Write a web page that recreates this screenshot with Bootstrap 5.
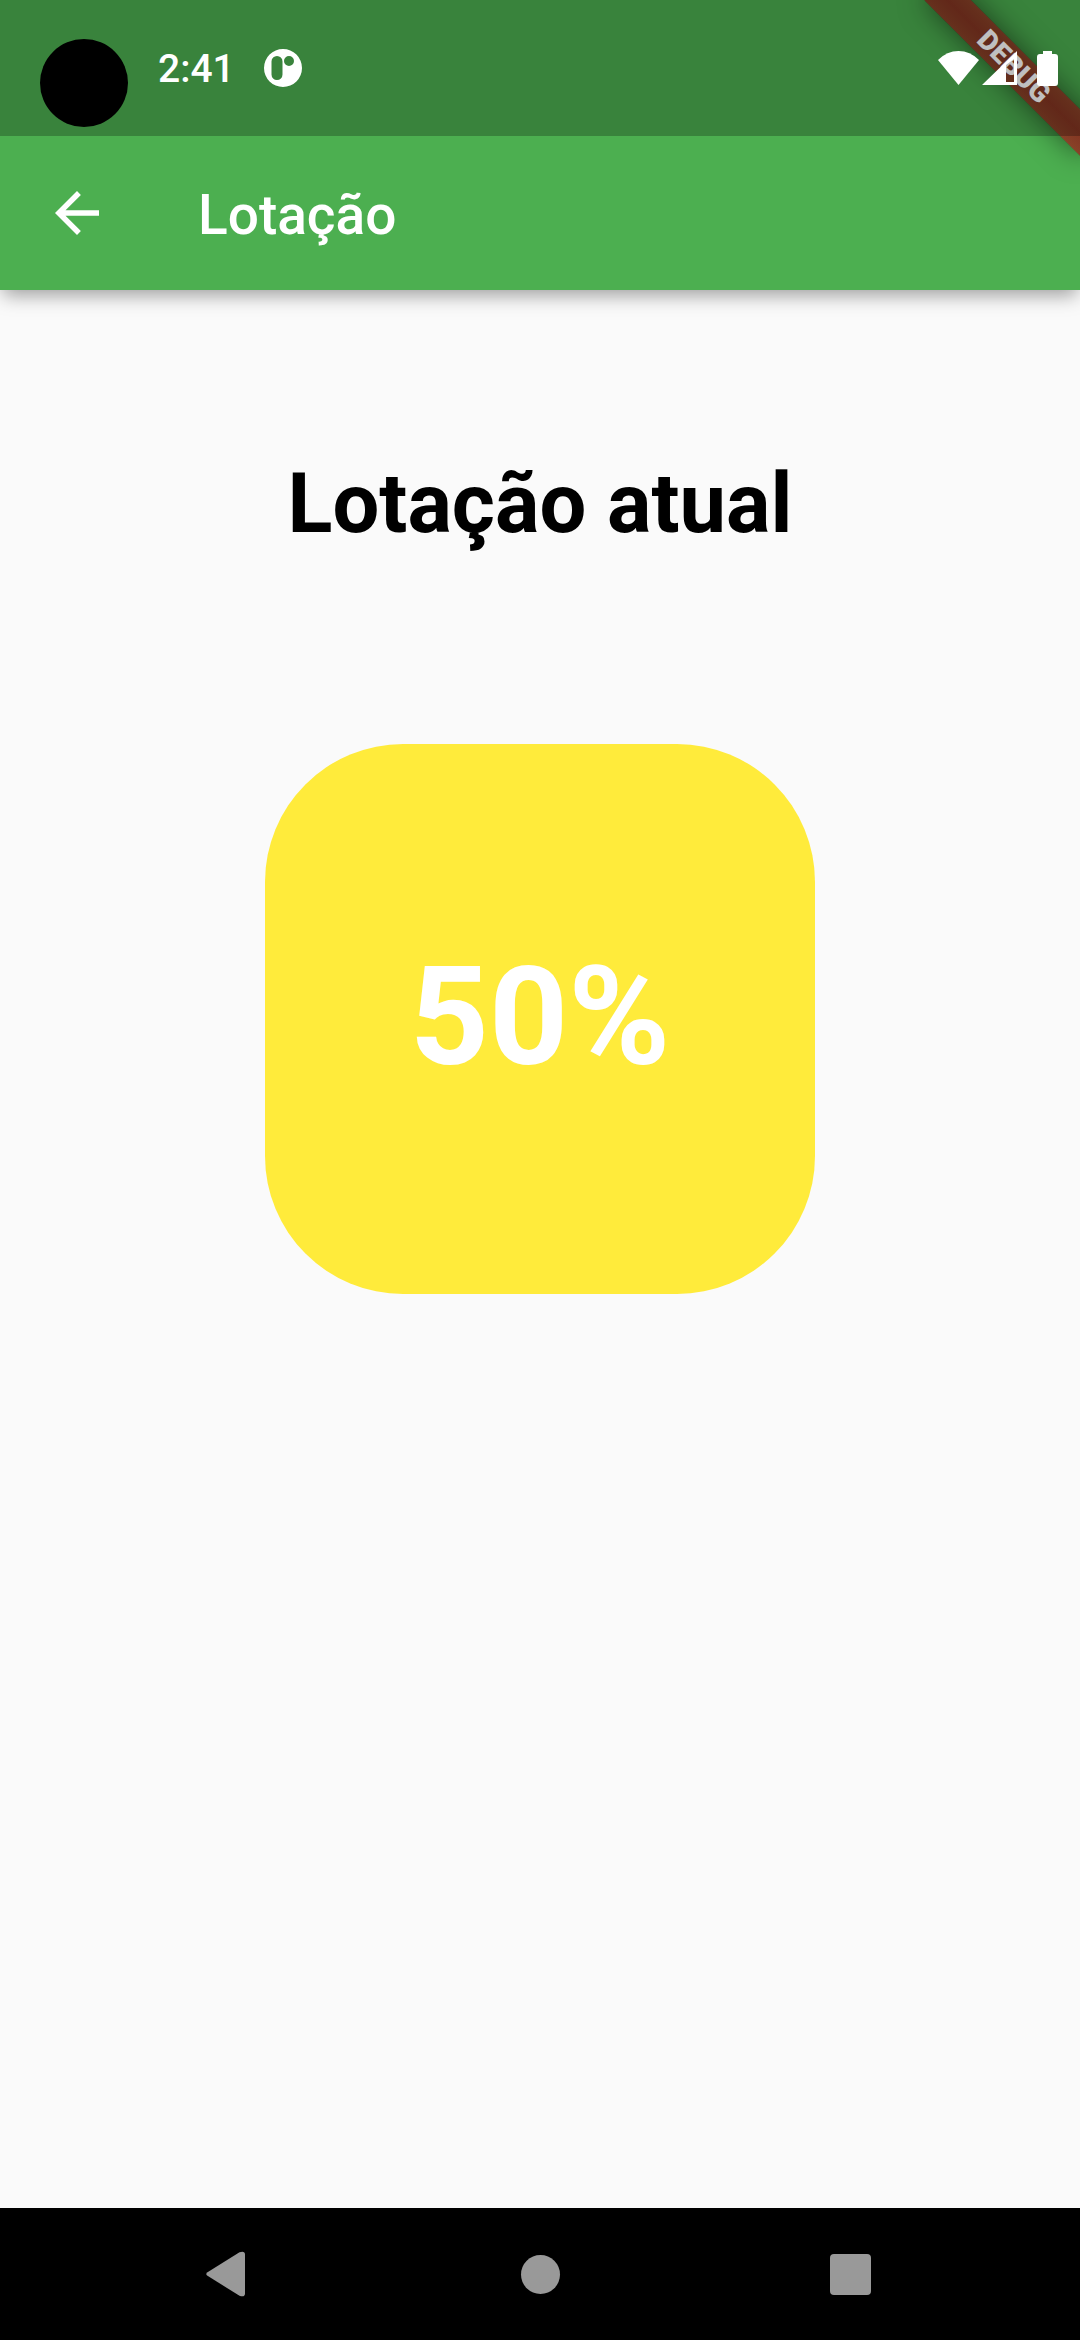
<!DOCTYPE html>
<html lang="pt-BR">
<head>
<meta charset="utf-8">
<meta name="viewport" content="width=device-width, initial-scale=1">
<title>Lotação</title>
<link href="https://cdn.jsdelivr.net/npm/bootstrap@5.3.0/dist/css/bootstrap.min.css" rel="stylesheet">
<style>
  body { font-family: Roboto, "Noto Sans", sans-serif; background: #fafafa; color: #000; }
  .app-head { background: #4caf50; color: #fff; box-shadow: 0 8px 18px -3px rgba(0, 0, 0, .38); }
  .status-strip { height: 136px; padding: 0 20px 0 40px; background: rgba(0, 0, 0, .25); z-index: 2; }
  .status-side { height: 136px; }
  .camera-dot { width: 88px; height: 88px; margin: 30px 30px 0 0; background: #000; }
  .clock-text { font-size: 39px; line-height: 46px; font-weight: 500; padding-top: 2px; margin-right: 28px; }
  .toolbar-row { height: 154px; }
  .back-btn { width: 154px; height: 154px; margin-right: 44px; border-radius: 0; }
  .screen-title { font-size: 55px; line-height: 64px; font-weight: 500; padding-top: 4px; }
  .ribbon-box { width: 240px; height: 240px; top: 0; right: 0; z-index: 1; pointer-events: none; }
  .ribbon { top: 50px; right: -44px; width: 220px; height: 33px; transform: rotate(45deg);
    background: linear-gradient(rgba(183, 28, 28, .63), rgba(183, 28, 28, .63)),
      linear-gradient(rgba(0, 0, 0, .25), rgba(0, 0, 0, .45) 50%, rgba(0, 0, 0, .25));
    box-shadow: 0 0 28px rgba(0, 0, 0, .5);
    font-size: 28px; line-height: 33px; font-weight: 900; }
  .main-area { padding: 160px 24px; gap: 186px; }
  .main-title { font-size: 83px; line-height: 108px; font-weight: 700; }
  .gauge { width: 550px; height: 550px; padding-bottom: 4px; border-radius: 138px; background: #ffeb3b; color: #fff;
    font-size: 138px; line-height: 162px; font-weight: 700; }
  .nav-strip { height: 132px; padding: 0 74px; background: #000; }
  .nav-key { height: 132px; color: #999; border-radius: 0; }
</style>
<script src="https://cdn.jsdelivr.net/npm/bootstrap@5.3.0/dist/js/bootstrap.bundle.min.js"></script>
</head>
<body class="d-flex flex-column min-vh-100">
  <header class="app-head position-relative">
    <div class="status-strip position-relative d-flex justify-content-between">
      <div class="status-side d-flex align-items-center">
        <span class="camera-dot rounded-circle"></span>
        <span class="clock-text">2:41</span>
        <svg width="40" height="40" viewBox="0 0 40 40" aria-hidden="true">
          <path fill="#fff" fill-rule="evenodd" d="M20 1a19 19 0 1 1 0 38a19 19 0 1 1 0-38zM14 8a5.500 5.500 0 0 0-5.500 5.500v13a5.500 5.500 0 0 0 11 0v-13A5.500 5.500 0 0 0 14 8zM26 8a5 5 0 1 0 0 10a5 5 0 1 0 0-10z"/>
        </svg>
      </div>
      <div class="status-side d-flex align-items-center">
        <svg width="122" height="36" viewBox="0 0 122 36" fill="#fff" aria-hidden="true">
          <path d="M0 10Q9 1 20.500 1T41 10L20.500 35z"/>
          <path fill-rule="evenodd" d="M44 35L79 1v34zM68 15v17h8V9z"/>
          <path d="M105 1h9v3h3q3 0 3 3v26q0 3-3 3h-15q-3 0-3-3V7q0-3 3-3h3z"/>
        </svg>
      </div>
    </div>
    <div class="toolbar-row d-flex align-items-center">
      <button type="button" class="back-btn btn p-0 border-0 text-white d-flex align-items-center justify-content-center" aria-label="Voltar">
        <svg width="66" height="66" viewBox="0 0 24 24" fill="currentColor"><path d="M20 11H7.830l5.590-5.590L12 4l-8 8 8 8 1.410-1.410L7.830 13H20z"/></svg>
      </button>
      <h1 class="screen-title m-0">Lotação</h1>
    </div>
    <div class="ribbon-box position-absolute overflow-hidden">
      <div class="ribbon position-absolute text-center">DEBUG</div>
    </div>
  </header>

  <main class="main-area flex-grow-1 d-flex flex-column align-items-center">
    <h2 class="main-title m-0 text-center">Lotação atual</h2>
    <div class="gauge d-flex align-items-center justify-content-center">50%</div>
  </main>

  <nav class="nav-strip d-flex" aria-label="Sistema">
    <button type="button" class="nav-key btn p-0 border-0 flex-fill w-100" aria-label="Voltar ao anterior">
      <svg width="48" height="48" viewBox="0 0 48 48" fill="currentColor"><path d="M2.500 22.200L34.500 2.200Q40 .500 40 4.500v39Q40 47.500 34.500 45.800L2.500 25.800Q0 24 2.500 22.200z"/></svg>
    </button>
    <button type="button" class="nav-key btn p-0 border-0 flex-fill w-100" aria-label="Início">
      <svg width="48" height="48" viewBox="0 0 48 48" fill="currentColor"><circle cx="24.500" cy="24.500" r="19.500"/></svg>
    </button>
    <button type="button" class="nav-key btn p-0 border-0 flex-fill w-100" aria-label="Recentes">
      <svg width="48" height="48" viewBox="0 0 48 48" fill="currentColor"><rect x="3" y="4" width="41" height="41" rx="4"/></svg>
    </button>
  </nav>
</body>
</html>
